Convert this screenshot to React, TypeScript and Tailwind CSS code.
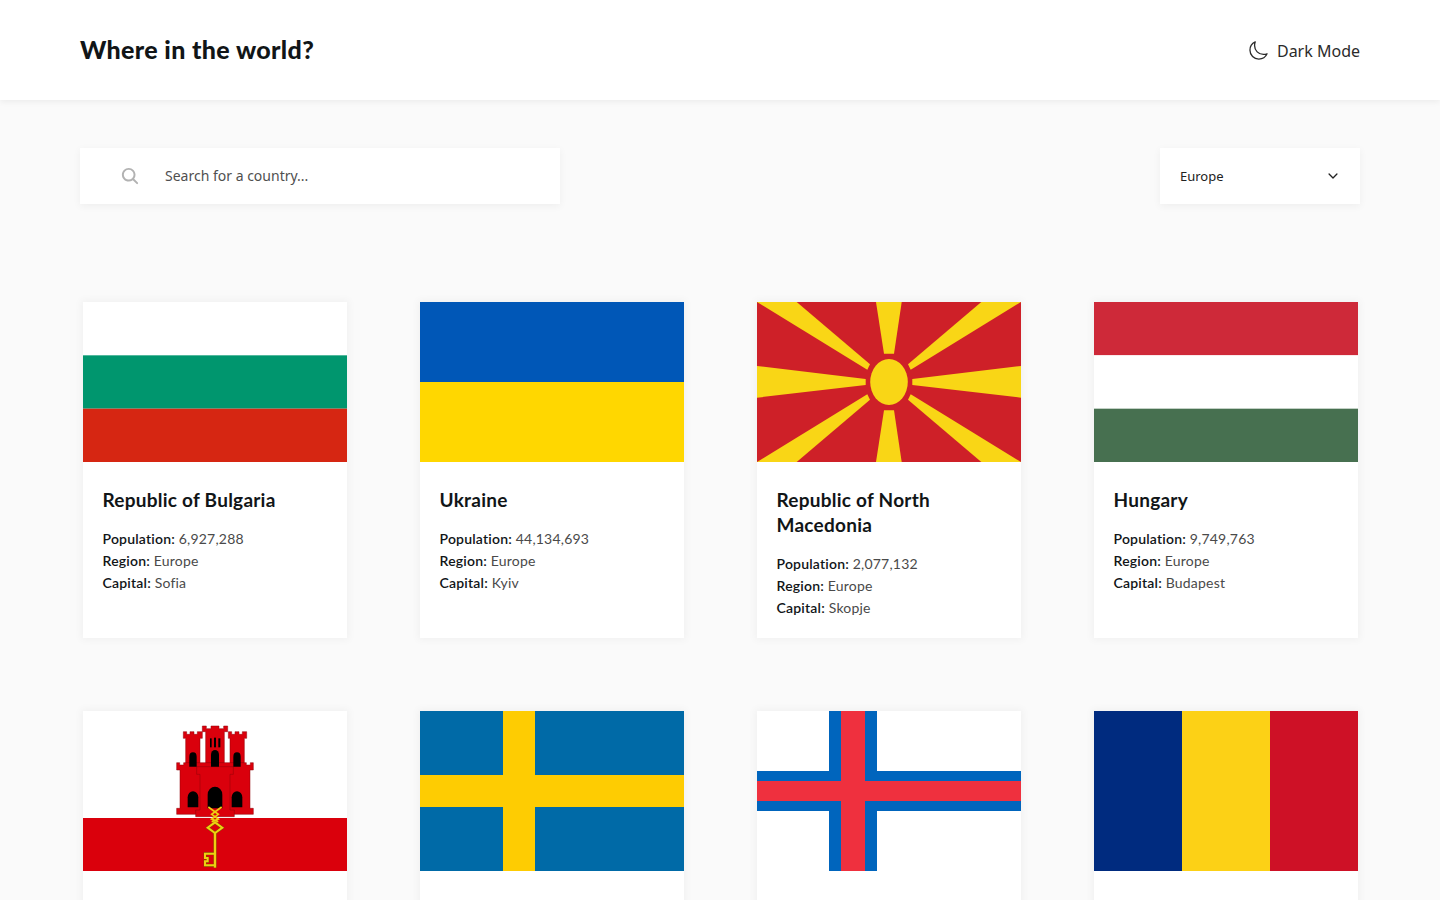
import { IoChevronDown, IoMoonOutline, IoSearch } from 'react-icons/io5';
import type { ReactNode } from 'react';

interface Country {
  id: string;
  name?: string;
  population?: string;
  region?: string;
  capital?: string;
  flag: ReactNode;
}

function Flag({ children }: { children: ReactNode }) {
  return (
    <svg className="block h-40 w-[264px]" viewBox="0 0 264 160" xmlns="http://www.w3.org/2000/svg">
      {children}
    </svg>
  );
}

const sunRays = [
  '119,0 144.7,0 137,51.7 127,51.7',
  '119,160 144.7,160 137,108.3 127,108.3',
  '0,64 0,95.7 108.7,83 108.7,77',
  '264,64 264,95.7 155.3,83 155.3,77',
  '0,0 39.7,0 113,62.3 110.3,67.7',
  '264,0 224.3,0 151,62.3 153.7,67.7',
  '0,160 39.7,160 113,97.7 110.3,92.3',
  '264,160 224.3,160 151,97.7 153.7,92.3',
];

function Castle() {
  return (
    <g transform="translate(82 4) scale(0.3333)" stroke="#8f0008" strokeWidth="1.5">
      {/* towers */}
      <path fill="#da000c" d="M55 50h10v8h10v-8h12v8h10v-8h15v20h-7v92H62V70h-7z" />
      <path fill="#da000c" d="M190 50h10v8h10v-8h12v8h10v-8h13v20h-7v92h-43V70h-5z" />
      <path fill="#da000c" d="M112 33h12v8h14v-8h24v8h14v-8h12v17h-10v100h-56V50h-10z" />
      {/* lower wall */}
      <path
        fill="#da000c"
        d="M35 143h9v7h12v-7h188v7h12v-7h9v22h-10v115h10v18H35v-18h10V165H35z"
      />
      {/* keep */}
      <path fill="#da000c" d="M95 155h110v23h-10v107h13v20H92v-20h13V178H95z" />
      {/* doors and slits */}
      <g fill="#000" stroke="none">
        <path d="M73 155v-30a11 13 0 0 1 22 0v30z" />
        <path d="M138 155v-36a12 14 0 0 1 24 0v36z" />
        <path d="M205 155v-30a11 13 0 0 1 22 0v30z" />
        <path d="M68 277v-30a16 18 0 0 1 32 0v30z" />
        <path d="M128 280v-41a22 24 0 0 1 44 0v41z" />
        <path d="M200 277v-30a16 18 0 0 1 32 0v30z" />
        <rect x="135" y="70" width="5" height="27" />
        <rect x="147" y="68" width="6" height="29" />
        <rect x="160" y="70" width="6" height="27" />
      </g>
      {/* key */}
      <g fill="none" stroke="#6e5a00" strokeWidth="8">
        <path d="M150 322l22 16-22 16-22-16z" />
        <path d="M150 354v104" strokeWidth="9" />
        <path d="M147 416h-27v13h8v10h-8v12h27" />
      </g>
      <g fill="none" stroke="#efcf10" strokeWidth="5">
        <path d="M130 276l30 22-20 14 20 8M170 276l-30 22 20 14-20 8" />
        <path d="M150 322l22 16-22 16-22-16z" strokeWidth="6" />
        <path d="M150 354v104" strokeWidth="7" />
        <path d="M147 416h-27v13h8v10h-8v12h27" strokeWidth="6" />
      </g>
    </g>
  );
}

const countries: Country[] = [
  {
    id: 'bg',
    name: 'Republic of Bulgaria',
    population: '6,927,288',
    region: 'Europe',
    capital: 'Sofia',
    flag: (
      <Flag>
        <rect width="264" height="160" fill="#fff" />
        <rect y="53.33" width="264" height="53.34" fill="#00966e" />
        <rect y="106.67" width="264" height="53.33" fill="#d62612" />
      </Flag>
    ),
  },
  {
    id: 'ua',
    name: 'Ukraine',
    population: '44,134,693',
    region: 'Europe',
    capital: 'Kyiv',
    flag: (
      <Flag>
        <rect width="264" height="80" fill="#0057b7" />
        <rect y="80" width="264" height="80" fill="#ffd700" />
      </Flag>
    ),
  },
  {
    id: 'mk',
    name: 'Republic of North Macedonia',
    population: '2,077,132',
    region: 'Europe',
    capital: 'Skopje',
    flag: (
      <Flag>
        <rect width="264" height="160" fill="#ce2028" />
        {sunRays.map((points) => (
          <polygon key={points} points={points} fill="#f9d616" />
        ))}
        <ellipse cx="132" cy="80" rx="18.8" ry="23" fill="#f9d616" />
      </Flag>
    ),
  },
  {
    id: 'hu',
    name: 'Hungary',
    population: '9,749,763',
    region: 'Europe',
    capital: 'Budapest',
    flag: (
      <Flag>
        <rect width="264" height="53.33" fill="#ce2939" />
        <rect y="53.33" width="264" height="53.34" fill="#fff" />
        <rect y="106.67" width="264" height="53.33" fill="#477050" />
      </Flag>
    ),
  },
  // second row: only the flags are inside the frame
  {
    id: 'gi',
    flag: (
      <Flag>
        <rect width="264" height="107" fill="#fff" />
        <rect y="107" width="264" height="53" fill="#da000c" />
        <Castle />
      </Flag>
    ),
  },
  {
    id: 'se',
    flag: (
      <Flag>
        <rect width="264" height="160" fill="#006aa7" />
        <rect x="83" width="32" height="160" fill="#fecc02" />
        <rect y="64" width="264" height="32" fill="#fecc02" />
      </Flag>
    ),
  },
  {
    id: 'fo',
    flag: (
      <Flag>
        <rect width="264" height="160" fill="#fff" />
        <rect x="72" width="48" height="160" fill="#0065bd" />
        <rect y="60" width="264" height="40" fill="#0065bd" />
        <rect x="84" width="24" height="160" fill="#ef303e" />
        <rect y="70" width="264" height="20" fill="#ef303e" />
      </Flag>
    ),
  },
  {
    id: 'ro',
    flag: (
      <Flag>
        <rect width="88" height="160" fill="#002b7f" />
        <rect x="88" width="88" height="160" fill="#fcd116" />
        <rect x="176" width="88" height="160" fill="#ce1126" />
      </Flag>
    ),
  },
];

function Detail({ label, value }: { label: string; value?: string }) {
  return (
    <p className="text-[14px] leading-[22px] tracking-[0.2px] text-[#4a4a4a]">
      <span className="font-semibold text-[#111517]">{label}:</span> {value}
    </p>
  );
}

function CountryCard({ country }: { country: Country }) {
  return (
    <div className="h-[336px] bg-white shadow-[0_0_8px_2px_rgba(0,0,0,0.04)]">
      {country.flag}
      {country.name && (
        <div className="pt-[25px] pr-5 pl-[19.5px]">
          <h2 className="mb-4 text-[19px] leading-[25px] font-bold tracking-[0.25px] text-[#111517]">
            {country.name}
          </h2>
          <Detail label="Population" value={country.population} />
          <Detail label="Region" value={country.region} />
          <Detail label="Capital" value={country.capital} />
        </div>
      )}
    </div>
  );
}

export default function App() {
  return (
    <div className="h-screen overflow-hidden bg-[#fafafa] font-['Lato',sans-serif]">
      {/* Header */}
      <header className="flex h-[100px] items-center justify-between bg-white px-20 shadow-[0_2px_6px_rgba(0,0,0,0.06)]">
        <h1 className="pb-[1px] text-[25px] font-black tracking-[0.35px] text-[#111517]">
          Where in the world?
        </h1>
        <button className="flex items-center gap-2 pt-[2px] font-['Noto_Sans',sans-serif] text-[16px] text-[#2b2b2b]">
          <IoMoonOutline className="size-[21px] -translate-y-[1px]" />
          Dark Mode
        </button>
      </header>

      <main className="px-20 pt-12">
        {/* Filters */}
        <div className="flex items-center justify-between font-['Noto_Sans',sans-serif]">
          <label className="flex h-14 w-[480px] items-center gap-[25px] bg-white pl-[40px] shadow-[0_2px_8px_rgba(0,0,0,0.05)]">
            <IoSearch className="size-[20px] text-[#b2b2b2]" />
            <input
              className="flex-1 bg-transparent pb-[2px] text-[14px] outline-none placeholder:text-[#4f4f4f]"
              placeholder="Search for a country..."
            />
          </label>
          <button className="flex h-14 w-[200px] items-center justify-between bg-white pr-[20px] pl-5 text-[13px] text-[#222] shadow-[0_2px_8px_rgba(0,0,0,0.05)]">
            <span className="pt-[2px]">Europe</span>
            <IoChevronDown className="size-[14px]" />
          </button>
        </div>

        {/* Countries */}
        <div className="mt-[98px] grid grid-cols-[repeat(4,264px)] gap-[73px] pl-[3px]">
          {countries.map((country) => (
            <CountryCard key={country.id} country={country} />
          ))}
        </div>
      </main>
    </div>
  );
}
